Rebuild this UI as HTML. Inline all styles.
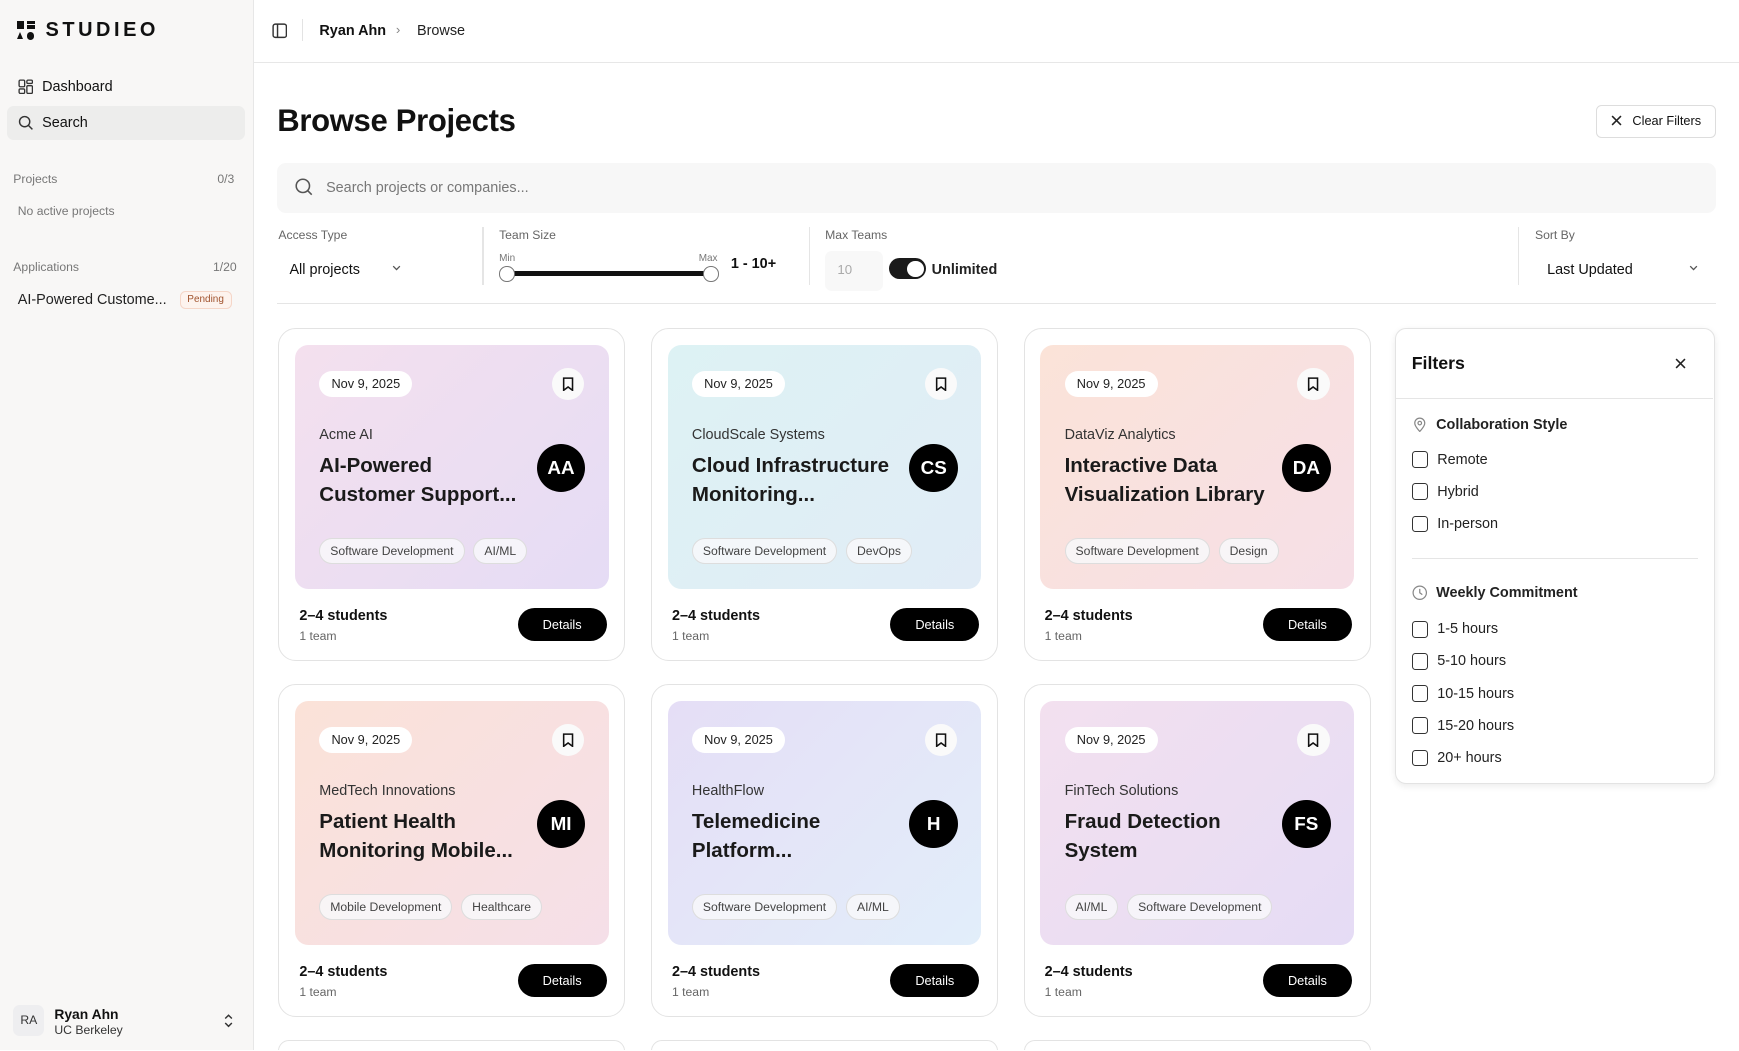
<!DOCTYPE html>
<html><head><meta charset="utf-8"><style>
*{box-sizing:border-box;margin:0;padding:0}
html,body{width:1739px;height:1051px;overflow:hidden;background:#fff}
body{font-family:"Liberation Sans",sans-serif;color:#111}
#w{zoom:1.10906;width:1568px;height:947px;position:relative;overflow:hidden}
.abs{position:absolute}
.side{left:0;top:0;width:229px;height:947px;background:#f8f7f6;border-right:1px solid #e7e7e7}
.muted{color:#777}
.card{position:absolute;width:313px;height:300px;border:1px solid #e3e3e3;border-radius:16px;background:#fff}
.inner{position:absolute;left:14px;top:14px;width:283px;height:220px;border-radius:12px}
.date{position:absolute;left:22px;top:24px;height:23px;padding:0 11px;background:#fff;border-radius:12px;font-size:11.5px;line-height:23px;color:#222}
.bm{position:absolute;left:232px;top:21px;width:29px;height:29px;border-radius:50%;background:#fafafa;display:flex;align-items:center;justify-content:center}
.co{position:absolute;left:22px;top:74px;font-size:13px;color:#333}
.tt{position:absolute;left:22px;top:97px;font-size:18.5px;font-weight:bold;line-height:25.5px;color:#1a1a1a;width:190px}
.av{position:absolute;left:218px;top:89px;width:44px;height:44px;border-radius:50%;background:#000;color:#fff;font-weight:bold;font-size:17px;display:flex;align-items:center;justify-content:center}
.tags{position:absolute;left:22px;top:174px;display:flex;gap:8px}
.tag{height:24px;padding:0 9px;border:1px solid #ddd;border-radius:12px;background:rgba(248,248,250,.85);font-size:11px;line-height:22px;color:#444}
.st{position:absolute;left:18px;top:251px;font-size:13px;font-weight:bold}
.tm{position:absolute;left:18px;top:270px;font-size:11px;color:#666}
.det{position:absolute;left:215px;top:251px;width:80px;height:30px;border-radius:15px;background:#000;color:#fff;font-size:11.5px;text-align:center;line-height:30px}
.cb{display:flex;align-items:center;gap:8px;font-size:13px;color:#222;height:29px}
.cb i{width:15px;height:15px;border:1.3px solid #333;border-radius:3px;display:inline-block}
.lbl{font-size:11px;color:#666}
</style></head><body><div id="w">

<div class="abs side">
  <div class="abs" style="left:15px;top:19px;width:18px;height:18px">
    <div class="abs" style="left:0;top:0;width:7px;height:7px;background:#111"></div>
    <div class="abs" style="left:9px;top:0;width:8px;height:3px;background:#111"></div>
    <div class="abs" style="left:9px;top:4px;width:8px;height:3px;background:#111"></div>
    <div class="abs" style="left:0;top:10px;width:0;height:0;border-left:3.5px solid transparent;border-right:3.5px solid transparent;border-bottom:7px solid #111"></div>
    <div class="abs" style="left:9px;top:10px;width:7px;height:7px;border-radius:50%;background:#111"></div>
  </div>
  <div class="abs" style="left:41px;top:17px;font-size:18px;font-weight:bold;letter-spacing:3.2px">STUDIEO</div>
  <svg class="abs" style="left:16px;top:71px" width="14" height="14" viewBox="0 0 14 14" fill="none" stroke="#333" stroke-width="1.2"><rect x="1" y="1" width="5" height="6" rx="1"/><rect x="8" y="1" width="5" height="3" rx="1"/><rect x="8" y="6" width="5" height="7" rx="1"/><rect x="1" y="9" width="5" height="4" rx="1"/></svg>
  <div class="abs" style="left:38px;top:71px;font-size:13px">Dashboard</div>
  <div class="abs" style="left:6px;top:96px;width:215px;height:30px;background:#ededec;border-radius:6px"></div>
  <svg class="abs" style="left:16px;top:104px" width="14" height="14" viewBox="0 0 14 14" fill="none" stroke="#333" stroke-width="1.3"><circle cx="6" cy="6" r="4.6"/><path d="M9.5 9.5L13 13"/></svg>
  <div class="abs" style="left:38px;top:104px;font-size:13px">Search</div>
  <div class="abs muted" style="left:12px;top:155px;font-size:11px">Projects</div>
  <div class="abs muted" style="left:196px;top:155px;font-size:11px">0/3</div>
  <div class="abs muted" style="left:16px;top:184px;font-size:11px">No active projects</div>
  <div class="abs muted" style="left:12px;top:234px;font-size:11px">Applications</div>
  <div class="abs muted" style="left:192px;top:234px;font-size:11px">1/20</div>
  <div class="abs" style="left:16px;top:263px;font-size:13px;color:#222">AI-Powered Custome...</div>
  <div class="abs" style="left:162px;top:262px;height:17px;padding:0 6px;border:1px solid #f5d6c8;background:#fdf3ee;border-radius:5px;font-size:9px;line-height:15px;color:#a0522d">Pending</div>
  <div class="abs" style="left:12px;top:906px;width:28px;height:28px;border-radius:6px;background:#eeeef0;font-size:11px;text-align:center;line-height:28px;color:#333">RA</div>
  <div class="abs" style="left:49px;top:907px;font-size:12.5px;font-weight:bold">Ryan Ahn</div>
  <div class="abs" style="left:49px;top:922px;font-size:11px;color:#333">UC Berkeley</div>
  <svg class="abs" style="left:201px;top:913px" width="10" height="14" viewBox="0 0 10 14" fill="none" stroke="#333" stroke-width="1.3"><path d="M2 5L5 2L8 5M2 9L5 12L8 9"/></svg>
</div>

<svg class="abs" style="left:245px;top:21px" width="14" height="14" viewBox="0 0 14 14" fill="none" stroke="#333" stroke-width="1.3"><rect x="1" y="1" width="12" height="12" rx="2"/><path d="M5 1V13"/></svg>
<div class="abs" style="left:272px;top:17px;width:1px;height:20px;background:#e3e3e3"></div>
<div class="abs" style="left:288px;top:21px;font-size:13px;font-weight:bold">Ryan Ahn</div>
<div class="abs" style="left:357px;top:20px;font-size:12px;color:#888">›</div>
<div class="abs" style="left:376px;top:21px;font-size:13px;color:#222">Browse</div>
<div class="abs" style="left:229px;top:56px;width:1339px;height:1px;background:#e7e7e7"></div>

<div class="abs" style="left:250px;top:93px;font-size:28px;font-weight:bold;letter-spacing:-.3px">Browse Projects</div>
<div class="abs" style="left:1439px;top:95px;width:108px;height:29px;border:1px solid #ddd;border-radius:5px;font-size:11.5px;line-height:27px;padding-left:32px">Clear Filters</div>
<svg class="abs" style="left:1453px;top:104px" width="10" height="10" viewBox="0 0 10 10" stroke="#222" stroke-width="1.4"><path d="M1 1L9 9M9 1L1 9"/></svg>

<div class="abs" style="left:250px;top:147px;width:1297px;height:45px;background:#f7f7f7;border-radius:8px"></div>
<svg class="abs" style="left:265px;top:160px" width="18" height="18" viewBox="0 0 18 18" fill="none" stroke="#555" stroke-width="1.4"><circle cx="8" cy="8" r="6"/><path d="M12.5 12.5L16 16"/></svg>
<div class="abs" style="left:294px;top:162px;font-size:13px;color:#777">Search projects or companies...</div>

<div class="abs lbl" style="left:251px;top:206px">Access Type</div>
<div class="abs" style="left:261px;top:236px;font-size:13px">All projects</div>
<svg class="abs" style="left:353px;top:238px" width="10" height="8" viewBox="0 0 10 8" fill="none" stroke="#555" stroke-width="1.2"><path d="M2 2L5 5L8 2"/></svg>
<div class="abs" style="left:435px;top:205px;width:1px;height:52px;background:#e5e5e5"></div>
<div class="abs lbl" style="left:450px;top:206px">Team Size</div>
<div class="abs" style="left:450px;top:228px;font-size:9px;color:#777">Min</div>
<div class="abs" style="left:630px;top:228px;font-size:9px;color:#777">Max</div>
<div class="abs" style="left:457px;top:244px;width:184px;height:5px;background:#111;border-radius:2px"></div>
<div class="abs" style="left:450px;top:240px;width:14px;height:14px;border-radius:50%;background:#fff;border:1px solid #777"></div>
<div class="abs" style="left:634px;top:240px;width:14px;height:14px;border-radius:50%;background:#fff;border:1px solid #777"></div>
<div class="abs" style="left:659px;top:231px;font-size:13px;font-weight:bold">1 - 10+</div>
<div class="abs" style="left:729px;top:205px;width:1px;height:52px;background:#e5e5e5"></div>
<div class="abs lbl" style="left:744px;top:206px">Max Teams</div>
<div class="abs" style="left:744px;top:226px;width:52px;height:36px;background:#f8f8f8;border-radius:6px;font-size:12px;color:#aaa;padding:10px 0 0 11px">10</div>
<div class="abs" style="left:802px;top:233px;width:33px;height:19px;border-radius:10px;background:#1a1a1a"></div>
<div class="abs" style="left:818px;top:235px;width:15px;height:15px;border-radius:50%;background:#fff"></div>
<div class="abs" style="left:840px;top:236px;font-size:13px;font-weight:bold;color:#222">Unlimited</div>
<div class="abs" style="left:1369px;top:205px;width:1px;height:52px;background:#e5e5e5"></div>
<div class="abs lbl" style="left:1384px;top:206px">Sort By</div>
<div class="abs" style="left:1395px;top:236px;font-size:13px">Last Updated</div>
<svg class="abs" style="left:1522px;top:238px" width="10" height="8" viewBox="0 0 10 8" fill="none" stroke="#555" stroke-width="1.2"><path d="M2 2L5 5L8 2"/></svg>
<div class="abs" style="left:250px;top:273px;width:1297px;height:1px;background:#e5e5e5"></div>

<div class="card" style="left:251px;top:296px"><div class="inner" style="background:linear-gradient(135deg,#f4e0ee,#e5dcf5)"><div class="date">Nov 9, 2025</div><div class="bm"><svg width="11" height="13" viewBox="0 0 11 13" fill="none" stroke="#111" stroke-width="1.4"><path d="M1.5 1H9.5V12L5.5 9L1.5 12Z"/></svg></div><div class="co">Acme AI</div><div class="tt">AI-Powered Customer Support...</div><div class="av">AA</div><div class="tags"><div class="tag">Software Development</div><div class="tag">AI/ML</div></div></div><div class="st">2–4 students</div><div class="tm">1 team</div><div class="det">Details</div></div>

<div class="card" style="left:587px;top:296px"><div class="inner" style="background:linear-gradient(135deg,#ddf2f4,#e1ecf6)"><div class="date">Nov 9, 2025</div><div class="bm"><svg width="11" height="13" viewBox="0 0 11 13" fill="none" stroke="#111" stroke-width="1.4"><path d="M1.5 1H9.5V12L5.5 9L1.5 12Z"/></svg></div><div class="co">CloudScale Systems</div><div class="tt">Cloud Infrastructure Monitoring...</div><div class="av">CS</div><div class="tags"><div class="tag">Software Development</div><div class="tag">DevOps</div></div></div><div class="st">2–4 students</div><div class="tm">1 team</div><div class="det">Details</div></div>

<div class="card" style="left:923px;top:296px"><div class="inner" style="background:linear-gradient(135deg,#fbe3d8,#f6dfe7)"><div class="date">Nov 9, 2025</div><div class="bm"><svg width="11" height="13" viewBox="0 0 11 13" fill="none" stroke="#111" stroke-width="1.4"><path d="M1.5 1H9.5V12L5.5 9L1.5 12Z"/></svg></div><div class="co">DataViz Analytics</div><div class="tt">Interactive Data Visualization Library</div><div class="av">DA</div><div class="tags"><div class="tag">Software Development</div><div class="tag">Design</div></div></div><div class="st">2–4 students</div><div class="tm">1 team</div><div class="det">Details</div></div>

<div class="card" style="left:251px;top:617px"><div class="inner" style="background:linear-gradient(135deg,#fbe2d8,#f5dfe8)"><div class="date">Nov 9, 2025</div><div class="bm"><svg width="11" height="13" viewBox="0 0 11 13" fill="none" stroke="#111" stroke-width="1.4"><path d="M1.5 1H9.5V12L5.5 9L1.5 12Z"/></svg></div><div class="co">MedTech Innovations</div><div class="tt">Patient Health Monitoring Mobile...</div><div class="av">MI</div><div class="tags"><div class="tag">Mobile Development</div><div class="tag">Healthcare</div></div></div><div class="st">2–4 students</div><div class="tm">1 team</div><div class="det">Details</div></div>

<div class="card" style="left:587px;top:617px"><div class="inner" style="background:linear-gradient(135deg,#e5def6,#e2eefa)"><div class="date">Nov 9, 2025</div><div class="bm"><svg width="11" height="13" viewBox="0 0 11 13" fill="none" stroke="#111" stroke-width="1.4"><path d="M1.5 1H9.5V12L5.5 9L1.5 12Z"/></svg></div><div class="co">HealthFlow</div><div class="tt">Telemedicine Platform...</div><div class="av">H</div><div class="tags"><div class="tag">Software Development</div><div class="tag">AI/ML</div></div></div><div class="st">2–4 students</div><div class="tm">1 team</div><div class="det">Details</div></div>

<div class="card" style="left:923px;top:617px"><div class="inner" style="background:linear-gradient(135deg,#f3e0ef,#e5dcf5)"><div class="date">Nov 9, 2025</div><div class="bm"><svg width="11" height="13" viewBox="0 0 11 13" fill="none" stroke="#111" stroke-width="1.4"><path d="M1.5 1H9.5V12L5.5 9L1.5 12Z"/></svg></div><div class="co">FinTech Solutions</div><div class="tt">Fraud Detection System</div><div class="av">FS</div><div class="tags"><div class="tag">AI/ML</div><div class="tag">Software Development</div></div></div><div class="st">2–4 students</div><div class="tm">1 team</div><div class="det">Details</div></div>

<div class="card" style="left:251px;top:938px;height:20px"></div>
<div class="card" style="left:587px;top:938px;height:20px"></div>
<div class="card" style="left:923px;top:938px;height:20px"></div>

<div class="abs" style="left:1258px;top:296px;width:288px;height:411px;border:1px solid #e3e3e3;border-radius:10px;background:#fff;box-shadow:0 2px 6px rgba(0,0,0,.08)">
  <div class="abs" style="left:14px;top:21px;font-size:16px;font-weight:bold">Filters</div>
  <svg class="abs" style="left:251px;top:26px" width="10" height="10" viewBox="0 0 10 10" stroke="#222" stroke-width="1.4"><path d="M1 1L9 9M9 1L1 9"/></svg>
  <div class="abs" style="left:0;top:62px;width:286px;height:1px;background:#e5e5e5"></div>
  <svg class="abs" style="left:14px;top:79px" width="14" height="14" viewBox="0 0 14 14" fill="none" stroke="#888" stroke-width="1.1"><path d="M7 13C7 13 2.5 8.5 2.5 5.5A4.5 4.5 0 0 1 11.5 5.5C11.5 8.5 7 13 7 13Z"/><circle cx="7" cy="5.5" r="1.6"/></svg>
  <div class="abs" style="left:36px;top:79px;font-size:13px;font-weight:bold;color:#222">Collaboration Style</div>
  <div class="abs" style="left:14px;top:103px">
    <div class="cb"><i></i>Remote</div><div class="cb"><i></i>Hybrid</div><div class="cb"><i></i>In-person</div>
  </div>
  <div class="abs" style="left:14px;top:206px;width:258px;height:1px;background:#e5e5e5"></div>
  <svg class="abs" style="left:14px;top:231px" width="14" height="14" viewBox="0 0 14 14" fill="none" stroke="#888" stroke-width="1.1"><circle cx="7" cy="7" r="6"/><path d="M7 3.5V7L9.3 8.7"/></svg>
  <div class="abs" style="left:36px;top:231px;font-size:13px;font-weight:bold;color:#222">Weekly Commitment</div>
  <div class="abs" style="left:14px;top:256px">
    <div class="cb"><i></i>1-5 hours</div><div class="cb"><i></i>5-10 hours</div><div class="cb"><i></i>10-15 hours</div><div class="cb"><i></i>15-20 hours</div><div class="cb"><i></i>20+ hours</div>
  </div>
</div>

</div></body></html>
